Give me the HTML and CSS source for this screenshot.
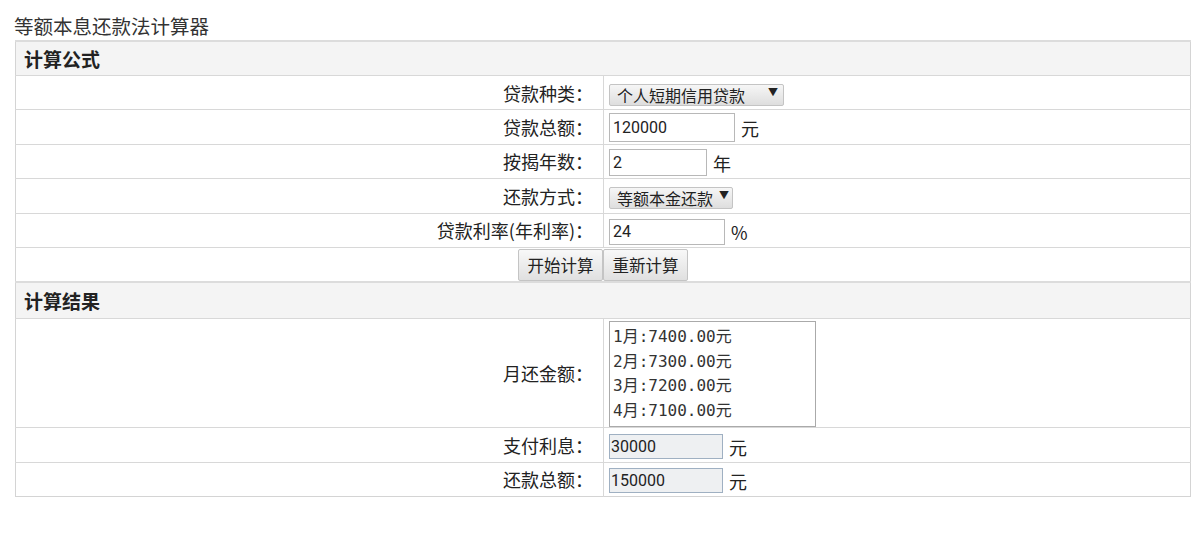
FILE: index.html
```html
<!DOCTYPE html>
<html lang="zh-CN">
<head>
  <meta charset="UTF-8">
  <meta name="viewport" content="width=device-width, initial-scale=1.0">
  <title>等额本息还款法计算器</title>
  <link rel="stylesheet" href="styles.css">
</head>
<body>
  <div class="page-title">等额本息还款法计算器</div>
  <table class="calc">
    <tr class="head"><td colspan="2">计算公式</td></tr>
    <tr>
      <td class="label">贷款种类：</td>
      <td class="field">
        <span class="select-wrap wide">
          <select class="select">
            <option>个人短期信用贷款</option>
          </select>
        </span>
      </td>
    </tr>
    <tr>
      <td class="label">贷款总额：</td>
      <td class="field"><input class="text amount" type="text" value="120000"><span class="unit">元</span></td>
    </tr>
    <tr>
      <td class="label">按揭年数：</td>
      <td class="field"><input class="text years" type="text" value="2"><span class="unit">年</span></td>
    </tr>
    <tr>
      <td class="label">还款方式：</td>
      <td class="field">
        <span class="select-wrap narrow">
          <select class="select">
            <option>等额本金还款</option>
          </select>
        </span>
      </td>
    </tr>
    <tr>
      <td class="label">贷款利率(年利率)：</td>
      <td class="field"><input class="text rate" type="text" value="24"><span class="unit">%</span></td>
    </tr>
    <tr>
      <td colspan="2" class="actions">
        <button class="btn">开始计算</button><button class="btn">重新计算</button>
      </td>
    </tr>
    <tr class="head second"><td colspan="2">计算结果</td></tr>
    <tr class="tall">
      <td class="label">月还金额：</td>
      <td class="field">
        <textarea class="monthly" readonly>1月:7400.00元
2月:7300.00元
3月:7200.00元
4月:7100.00元
5月:7000.00元</textarea>
      </td>
    </tr>
    <tr>
      <td class="label">支付利息：</td>
      <td class="field"><input class="text result" type="text" value="30000" readonly><span class="unit">元</span></td>
    </tr>
    <tr>
      <td class="label">还款总额：</td>
      <td class="field"><input class="text result" type="text" value="150000" readonly><span class="unit">元</span></td>
    </tr>
  </table>
</body>
</html>
```

FILE: styles.css
```css
body {
  font-family: "Noto Sans CJK SC", "Liberation Sans", sans-serif;
  color: #222;
  background-color: #fff;
  margin: 0;
  padding: 0;
}

.page-title {
  font-size: 19.5px;
  line-height: 24px;
  padding: 14px 0 0 14px;
  height: 26px;
  color: #333;
}

.calc {
  margin-left: 15px;
  width: 1176px;
  border-collapse: collapse;
  border: 1px solid #d4d4d4;
  font-size: 18px;
}

.calc td {
  border-top: 1px solid #d8d8d8;
  height: 33.4px;
  padding: 0;
}

.calc .head td {
  background-color: #f4f4f4;
  font-weight: bold;
  font-size: 19px;
  padding-left: 8px;
  height: 33px;
  border-top: 2px solid #dcdcdc;
}

.calc .second td {
  height: 35px;
}

.calc .label {
  width: 577px;
  text-align: right;
  padding-right: 10px;
  border-right: 1px solid #d8d8d8;
}

.calc .field {
  padding-left: 5px;
}

.text {
  font-family: Roboto, "Liberation Sans", sans-serif;
  font-size: 16px;
  color: #222;
  border: 1px solid #b8b8b8;
  padding: 0 3px;
  margin: 0;
  vertical-align: middle;
  box-sizing: border-box;
}

.amount {
  width: 126px;
  height: 29px;
}

.years {
  width: 98px;
  height: 27px;
}

.rate {
  width: 116px;
  height: 26px;
}

.result {
  width: 114px;
  height: 25px;
  background-color: #eef0f2;
  border: 1px solid #9fb0c2;
  padding-left: 1px;
}

.unit {
  margin-left: 6px;
  vertical-align: middle;
}

.select-wrap {
  position: relative;
  display: inline-block;
  vertical-align: middle;
}

.select-wrap::after {
  content: "\25BC";
  position: absolute;
  right: 6px;
  top: 3px;
  font-size: 10px;
  pointer-events: none;
}

.select {
  appearance: none;
  -webkit-appearance: none;
  font-family: "Noto Sans CJK SC", sans-serif;
  font-size: 16px;
  color: #222;
  height: 22px;
  line-height: 18px;
  padding: 0 0 0 7px;
  border: 1px solid #c4c4c4;
  border-radius: 2px;
  background: linear-gradient(#f6f6f6, #dedede);
}

.wide .select {
  width: 175px;
}

.narrow .select {
  width: 124px;
}

.narrow::after {
  right: 4px;
}

.actions {
  text-align: center;
}

.btn {
  font-family: "Noto Sans CJK SC", sans-serif;
  font-size: 16.5px;
  color: #222;
  height: 32px;
  padding: 0 8.5px;
  margin: 0;
  border: 1px solid #c4c4c4;
  border-radius: 2px;
  background: linear-gradient(#f8f8f8, #e0e0e0);
  vertical-align: middle;
}

.calc .tall td {
  height: 108px;
}

.monthly {
  font-family: "DejaVu Sans Mono", "Noto Sans CJK SC", monospace;
  font-size: 16px;
  line-height: 24.5px;
  width: 207px;
  height: 106px;
  padding: 3px 3px;
  margin: 2px 0 0 0;
  border: 1px solid #aaa;
  box-sizing: border-box;
  color: #333;
  resize: none;
  overflow: hidden;
  vertical-align: top;
}
```
